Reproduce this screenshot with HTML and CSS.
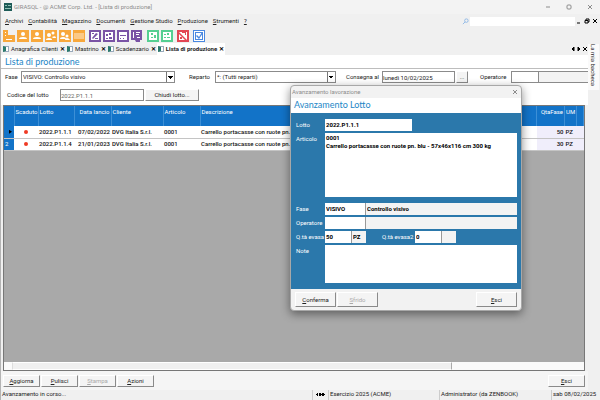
FILE: index.html
```html
<!DOCTYPE html>
<html lang="it">

<head>
    <meta charset="UTF-8">
    <meta name="viewport" content="width=device-width, initial-scale=1.0">
    <title>GIRASQL - Lista di produzione</title>
    <link rel="stylesheet" href="styles.css">
</head>

<body>
    <div class="window">
        <header class="titlebar">
            <svg class="logo" viewBox="0 0 8 8"><rect width="8" height="8" fill="#1d5b57"/><path d="M1 2h2v1H1zM4 2h3v1H4zM1 5h6v1H1z" fill="#8fc1b5"/></svg>
            <span>GIRASQL - @ ACME Corp. Ltd. - [Lista di produzione]</span>
            <div class="win-buttons">
                <button aria-label="Riduci"><svg viewBox="0 0 6 6"><path d="M1 3h4"/></svg></button>
                <button aria-label="Ingrandisci"><svg viewBox="0 0 6 6"><rect x="1" y="1" width="4" height="4" rx="1"/></svg></button>
                <button aria-label="Chiudi"><svg viewBox="0 0 6 6"><path d="M1 1l4 4M5 1l-4 4"/></svg></button>
            </div>
        </header>
        <nav class="menubar">
            <a href="#"><u>A</u>rchivi</a>
            <a href="#"><u>C</u>ontabilità</a>
            <a href="#"><u>M</u>agazzino</a>
            <a href="#"><u>D</u>ocumenti</a>
            <a href="#"><u>G</u>estione Studio</a>
            <a href="#"><u>P</u>roduzione</a>
            <a href="#"><u>S</u>trumenti</a>
            <a href="#"><u>?</u></a>
            <div class="search">
                <svg viewBox="0 0 8 8"><circle cx="5" cy="3" r="2" /><path d="M3.5 4.5L1 7"/></svg>
                <input type="text" aria-label="Cerca">
            </div>
            <div class="mdi-buttons">
                <button aria-label="Riduci scheda"><svg viewBox="0 0 6 6"><path d="M1 5h3"/></svg></button>
                <button aria-label="Ripristina scheda"><svg viewBox="0 0 6 6"><path d="M2 2V1h3v3H4M1 2.5h3V5H1z"/></svg></button>
                <button aria-label="Chiudi scheda"><svg viewBox="0 0 6 6"><path d="M1 1l4 4M5 1L1 5"/></svg></button>
            </div>
        </nav>
        <div class="toolbar">
            <div class="group orange">
                <button aria-label="Azienda"><svg viewBox="0 0 12 12"><path d="M0 0h5v5h7v7H0z"/><path class="w" d="M2 2h1v1H2zM2 5h1v1H2zM3 9h6v1H3z"/></svg></button>
                <button aria-label="Clienti"><svg viewBox="0 0 12 12"><path d="M0 0h12v12H0z"/><circle class="w" cx="6" cy="4" r="2"/><path class="w" d="M2 9q0-2 4-2t4 2z"/></svg></button>
                <button aria-label="Fornitori"><svg viewBox="0 0 12 12"><path d="M0 0h12v12H0z"/><circle class="w" cx="6" cy="4" r="2"/><path class="w" d="M2 9q0-2 4-2t4 2z"/></svg></button>
                <button aria-label="Agenti"><svg viewBox="0 0 12 12"><path d="M0 0h12v12H0z"/><circle class="w" cx="4" cy="5" r="2"/><circle class="w" cx="8" cy="3" r="1.5"/><path class="w" d="M1 10q0-2 3-2t3 2zM7 7q4-2 4 1H8z"/></svg></button>
                <button aria-label="Contatti"><svg viewBox="0 0 12 12"><path d="M0 0h12v12H0z"/><circle class="w" cx="4" cy="4" r="2"/><circle class="w" cx="8" cy="6" r="1.5"/><path class="w" d="M1 9q0-2 3-2t3 2zM6 10q0-2 2-2t3 2z"/></svg></button>
                <button aria-label="Articoli"><svg viewBox="0 0 12 12"><path d="M0 0h12v12H0z"/><path fill="#fbc987" d="M1 3h10v6H1z"/></svg></button>
            </div>
            <div class="group purple">
                <button aria-label="Modifica"><svg viewBox="0 0 12 12"><path d="M0 0h12v12H0z"/><path class="w" d="M2 2h8v8H2z"/><path d="M3 8l4-5 2 1-5 5zM6 8h3v1H6zM3 3h2v1H3z"/></svg></button>
                <button aria-label="Prima nota"><svg viewBox="0 0 12 12"><path d="M0 0h12v12H0z"/><path class="w" d="M2 2h8v8H2z"/><path d="M3 4h2v2H3zM6 3h2v2H6zM3 8h2v1H3zM6 7h3v2H6z"/></svg></button>
                <button aria-label="Scadenze"><svg viewBox="0 0 12 12"><path d="M0 0h12v12H0z"/><path class="w" d="M2 2h8v8H2z"/><path d="M3 5h6v1H3zM3 8h1v1H3zM6 8h1v1H6z"/></svg></button>
                <button aria-label="Registri"><svg viewBox="0 0 12 12"><path d="M0 0h11v10H9v2H5l-1-2H0z"/><path class="w" d="M2 2h1v6H2zM5 2h4v1H5zM5 4h3v1H5zM6 7h3v1H6z"/></svg></button>
            </div>
            <div class="group green">
                <button aria-label="Ordini"><svg viewBox="0 0 12 12"><path d="M0 0h12v12H0z"/><path class="w" d="M2 2h8v8H2z"/><path d="M4 3h2v2H4zM7 5h2v3H7zM4 7h2v1H4z"/></svg></button>
                <button aria-label="Documenti"><svg viewBox="0 0 12 12"><path d="M0 0h12v12H0z"/><path class="w" d="M2 2h8v8H2z"/><path d="M3 4h2v1H3zM6 3h2v2H6zM3 7h2v1H3zM6 7h3v1H6z"/></svg></button>
            </div>
            <div class="group red">
                <button aria-label="Produzione"><svg viewBox="0 0 12 12"><path d="M0 0h12v12H0z"/><path class="w" d="M2 2h8v8H2z"/><path d="M2 2l8 8H8L2 4zM5 2h4v3H8V3H5zM3 7h2v2H3z"/></svg></button>
            </div>
            <div class="group blue">
                <button aria-label="Attività"><svg viewBox="0 0 12 12"><path d="M0 0h12v12H0z"/><path class="w" d="M1 1h10v10H1z"/><path d="M2 2h8v8H2z"/><path class="w" d="M3 3h6v6H3z"/><path d="M3 6l1-1 2 2 3-5 1 1-4 6z"/></svg></button>
            </div>
        </div>
        <div class="workspace">
            <main class="content">
                <div class="tabs">
                    <a href="#" class="tab"><i class="tab-icon"></i>Anagrafica Clienti<b>✕</b></a>
                    <a href="#" class="tab"><i class="tab-icon"></i>Mastrino<b>✕</b></a>
                    <a href="#" class="tab"><i class="tab-icon"></i>Scadenzario<b>✕</b></a>
                    <a href="#" class="tab active"><i class="tab-icon"></i>Lista di produzione<b>✕</b></a>
                    <div class="tab-nav">
                        <button aria-label="Precedente"><svg viewBox="0 0 6 6"><path d="M4 1L2 3l2 2z"/></svg></button>
                        <button aria-label="Successiva"><svg viewBox="0 0 6 6"><path d="M2 1l2 2-2 2z"/></svg></button>
                        <button aria-label="Chiudi"><svg viewBox="0 0 6 6"><path d="M1 1l4 4M5 1L1 5"/></svg></button>
                    </div>
                </div>
                <h1>Lista di produzione</h1>
                <form class="filters">
                    <label for="fase" class="l-fase">Fase</label>
                    <select id="fase" class="fase">
                        <option>VISIVO: Controllo visivo</option>
                    </select>
                    <label for="reparto" class="l-reparto">Reparto</label>
                    <select id="reparto" class="reparto">
                        <option>*: (Tutti reparti)</option>
                    </select>
                    <label for="consegna" class="l-consegna">Consegna al</label>
                    <input id="consegna" class="consegna" type="text" value="lunedì 10/02/2025">
                    <button type="button" class="btn dots">...</button>
                    <label for="operatore" class="l-operatore">Operatore</label>
                    <input id="operatore" class="operatore" type="text">
                    <input class="operatore-nome" type="text" aria-label="Nome operatore" readonly>
                </form>
                <form class="lotto-row">
                    <label for="codice">Codice del lotto</label>
                    <input id="codice" type="text" value="2022.P1.1.1">
                    <button type="button" class="btn">Chiudi lotto...</button>
                </form>
                <div class="grid">
                    <table>
                        <colgroup>
                            <col class="c-num"><col class="c-scad"><col class="c-lotto"><col class="c-data"><col class="c-cli"><col class="c-art"><col><col class="c-qta"><col class="c-um"><col class="c-end">
                        </colgroup>
                        <thead>
                            <tr>
                                <th></th>
                                <th>Scaduto</th>
                                <th>Lotto</th>
                                <th class="right">Data lancio</th>
                                <th>Cliente</th>
                                <th>Articolo</th>
                                <th>Descrizione</th>
                                <th class="right">QtaFase</th>
                                <th>UM</th>
                                <th></th>
                            </tr>
                        </thead>
                        <tbody>
                            <tr>
                                <td class="num"><i class="arrow"></i></td>
                                <td class="center"><i class="dot"></i></td>
                                <td>2022.P1.1.1</td>
                                <td class="right">07/02/2022</td>
                                <td>DVG Italia S.r.l.</td>
                                <td>0001</td>
                                <td>Carrello portacasse con ruote pn.</td>
                                <td class="right tint">50</td>
                                <td class="tint">PZ</td>
                                <td class="tint"></td>
                            </tr>
                            <tr>
                                <td class="num">2</td>
                                <td class="center"><i class="dot"></i></td>
                                <td>2022.P1.1.4</td>
                                <td class="right">21/01/2023</td>
                                <td>DVG Italia S.r.l.</td>
                                <td>0001</td>
                                <td>Carrello portacasse con ruote pn.</td>
                                <td class="right tint">30</td>
                                <td class="tint">PZ</td>
                                <td class="tint"></td>
                            </tr>
                        </tbody>
                    </table>
                    <div class="scrollbar"><div class="thumb"></div></div>
                </div>
                <div class="actions">
                    <button class="btn"><u>A</u>ggiorna</button>
                    <button class="btn"><u>P</u>ulisci</button>
                    <button class="btn" disabled><u>S</u>tampa</button>
                    <button class="btn"><u>A</u>zioni</button>
                    <button class="btn last"><u>E</u>sci</button>
                </div>
            </main>
            <aside class="side"><a href="#">La mia bacheca</a></aside>
        </div>
        <footer class="statusbar">
            <span class="message">Avanzamento in corso...</span>
            <span class="plug"><svg viewBox="0 0 9 5"><path d="M0 2h1v1H0zM1 1h1v3H1zM3 1h2v3H3zM5 2h1v1H5zM6 1h2v3H6zM8 2h1v1H8z"/></svg></span>
            <span class="esercizio">Esercizio 2025 (ACME)</span>
            <span class="utente">Administrator (da ZENBOOK)</span>
            <span class="data">sab 08/02/2025</span>
        </footer>

        <form class="dialog" role="dialog" aria-label="Avanzamento lavorazione">
            <div class="dialog-title">
                <span>Avanzamento lavorazione</span>
                <button type="button" aria-label="Chiudi"><svg viewBox="0 0 6 6"><path d="M1 1l4 4M5 1L1 5"/></svg></button>
            </div>
            <h2>Avanzamento Lotto</h2>
            <div class="dialog-body">
                <label for="d-lotto">Lotto</label>
                <div class="field"><input id="d-lotto" class="w-lotto" type="text" value="2022.P1.1.1"></div>
                <label for="d-articolo">Articolo</label>
                <textarea id="d-articolo" class="articolo">0001
Carrello portacasse con ruote pn. blu - 57x46x116 cm 300 kg</textarea>
                <label for="d-fase">Fase</label>
                <div class="field">
                    <input id="d-fase" class="w-code" type="text" value="VISIVO">
                    <input class="grow" type="text" value="Controllo visivo" aria-label="Descrizione fase" readonly>
                </div>
                <label for="d-oper">Operatore</label>
                <div class="field">
                    <input id="d-oper" class="w-code" type="text">
                    <input class="grow" type="text" aria-label="Nome" readonly>
                </div>
                <label for="d-qta">Q.tà evasa</label>
                <div class="field">
                    <input id="d-qta" class="w-qta" type="text" value="50">
                    <input class="w-um" type="text" value="PZ" aria-label="UM" readonly>
                    <label for="d-qta2" class="second">Q.tà evasa2</label>
                    <input id="d-qta2" class="w-qta" type="text" value="0">
                    <input class="w-um" type="text" aria-label="UM 2" readonly>
                </div>
                <label for="d-note">Note</label>
                <textarea id="d-note" class="note"></textarea>
            </div>
            <div class="dialog-footer">
                <button type="button" class="btn"><u>C</u>onferma</button>
                <button type="button" class="btn" disabled><u>S</u>frido</button>
                <button type="button" class="btn last"><u>E</u>sci</button>
            </div>
        </form>
    </div>
</body>

</html>
```
FILE: styles.css
```css
* {
    box-sizing: border-box;
}

body {
    margin: 0;
    font-family: Roboto, "Open Sans", sans-serif;
    font-size: 6px;
    line-height: 8px;
    color: #222;
}

a {
    color: inherit;
    text-decoration: none;
}

button,
input,
select,
textarea {
    font: inherit;
    color: inherit;
    margin: 0;
    padding: 0;
    border: none;
    border-radius: 0;
    min-width: 0;
}

button {
    background: none;
}

svg {
    display: block;
    fill: none;
    stroke: currentColor;
}

.window {
    position: relative;
    display: flex;
    flex-direction: column;
    min-height: 100vh;
    background: #f0f0f0;
    border-left: 1px solid #b4b4b4;
}

/* title bar */
.titlebar {
    display: flex;
    align-items: center;
    height: 14px;
    padding: 0 7px 0 3px;
    gap: 2px;
    background: #f3f3f3;
    color: #8c8c8c;
}

.logo {
    width: 8px;
    height: 8px;
    stroke: none;
}

.win-buttons {
    display: flex;
    gap: 15px;
    margin-left: auto;
}

.win-buttons svg,
.mdi-buttons svg,
.tab-nav svg {
    width: 6px;
    height: 6px;
}

/* menu */
.menubar {
    display: flex;
    align-items: center;
    height: 14px;
    padding: 0 2px 0 4px;
    gap: 5px;
}

.search {
    display: flex;
    align-items: center;
    gap: 1px;
    margin-left: auto;
}

.search svg {
    width: 7px;
    height: 7px;
    color: #8ab6e6;
}

.search input {
    width: 105px;
    height: 9px;
    background: #fff;
}

.mdi-buttons {
    display: flex;
    gap: 2px;
    margin-left: -4px;
    color: #000;
}

/* toolbar */
.toolbar {
    display: flex;
    height: 15px;
    padding: 1px 2px;
    gap: 4px;
}

.group {
    display: flex;
    gap: 2px;
}

.group svg {
    width: 12px;
    height: 12px;
    fill: currentColor;
    stroke: none;
}

.group .w {
    fill: #fff;
}

.orange {
    color: #f8a83c;
}

.purple {
    color: #7a53a5;
}

.green {
    color: #55cf92;
}

.red {
    color: #e34654;
}

.blue {
    color: #4a88e0;
}

.workspace {
    display: flex;
    flex: 1;
}

.content {
    display: flex;
    flex-direction: column;
    flex: 1;
    min-width: 0;
}

/* tabs */
.tabs {
    display: flex;
    height: 12px;
    padding-left: 1px;
}

.tab {
    display: flex;
    align-items: center;
    gap: 2px;
    padding: 0 1px;
}

.tab b {
    font-size: 6px;
    color: #000;
}

.tab.active {
    background: #fff;
    font-weight: bold;
}

.tab-icon {
    width: 6px;
    height: 6px;
    border: 1px solid #9ab;
    border-left: 3px solid #2c7b6c;
    background: #fff;
}

.tab-nav {
    display: flex;
    align-items: center;
    margin-left: auto;
    color: #000;
}

.tab-nav svg {
    fill: currentColor;
}

h1,
h2 {
    margin: 0;
    font-family: Lato, "Open Sans", sans-serif;
    font-weight: normal;
    color: #1c86c6;
}

h1 {
    height: 14px;
    padding-left: 4px;
    font-size: 9px;
    line-height: 13px;
    background: #fff;
    border-bottom: 1px solid #bdbdbd;
}

/* filters */
.filters,
.lotto-row {
    display: flex;
    align-items: center;
    background: #fff;
}

.filters {
    height: 16px;
    padding-left: 4px;
}

.l-fase {
    width: 16px;
}

.l-reparto {
    width: 26px;
}

.l-consegna {
    width: 36px;
}

.l-operatore {
    width: 31px;
}

.filters input,
.filters select,
.lotto-row input {
    height: 12px;
    border: 1px solid #8b8b8b;
    background: #fff;
}

.filters select {
    appearance: none;
    padding-left: 1px;
    background: linear-gradient(#777, #777) right 7px top / 1px 100% no-repeat,
        conic-gradient(from 315deg at 50% 100%, #000 90deg, transparent 0) right 1px center / 6px 3px no-repeat, #fff;
}

.filters .fase {
    width: 154px;
    margin-right: 14px;
}

.filters .reparto {
    width: 121px;
    margin-right: 10px;
}

.filters .consegna {
    width: 73px;
}

.btn {
    height: 12px;
    background: #f4f4f4;
    border: 1px solid;
    border-color: #fff #8a8a8a #8a8a8a #fff;
    color: #222;
}

.btn:disabled {
    color: #aaa;
}

.dots {
    width: 12px;
    margin: 0 12px 0 1px;
}

.filters .operatore {
    width: 28px;
}

.filters .operatore-nome {
    flex: 1;
    border-left: none;
    border-right: none;
    background: #f3f3f3;
}

.lotto-row {
    height: 20px;
    padding-left: 6px;
}

.lotto-row label {
    width: 53px;
}

.lotto-row input {
    width: 84px;
    color: #666;
}

.lotto-row .btn {
    width: 54px;
    margin-left: 1px;
}

/* grid */
.grid {
    display: flex;
    flex-direction: column;
    flex: 1;
    margin: 0 3px 0 2px;
    background: #a9a9a9;
    border: 1px solid #777;
}

table {
    width: 100%;
    table-layout: fixed;
    border-collapse: collapse;
}

.c-num {
    width: 10px;
}

.c-scad {
    width: 24px;
}

.c-lotto {
    width: 36px;
}

.c-data {
    width: 37px;
}

.c-cli {
    width: 52px;
}

.c-art {
    width: 37px;
}

.c-qta {
    width: 28px;
}

.c-um {
    width: 12px;
}

.c-end {
    width: 7px;
}

th,
td {
    padding: 0 1px;
    text-align: left;
    white-space: nowrap;
    overflow: hidden;
}

th {
    height: 20px;
    padding-top: 2px;
    vertical-align: top;
    font-weight: normal;
    color: #fff;
    background: #1273c8;
    border-right: 1px solid #3c8fd6;
}

td {
    height: 12px;
    font-weight: 500;
    color: #111;
    background: #fff;
    border-bottom: 1px solid #c4c4c4;
}

.right {
    text-align: right;
}

.center {
    text-align: center;
}

.num {
    font-weight: normal;
    color: #fff;
    background: #1273c8;
}

.tint {
    background: #f0eefb;
}

.dot {
    display: inline-block;
    width: 4px;
    height: 4px;
    border-radius: 50%;
    background: #ef3a24;
}

.arrow {
    display: block;
    margin-left: 4px;
    width: 3px;
    height: 4px;
    background: #000;
    clip-path: polygon(0 0, 100% 50%, 0 100%);
}

.scrollbar {
    height: 8px;
    margin-top: auto;
    padding-left: 8px;
    background: #fafafa;
}

.thumb {
    width: 77%;
    height: 8px;
    background: #f0f0f0;
    border: 1px solid;
    border-color: #fff #aaa #fff #ddd;
}

.actions {
    display: flex;
    gap: 1px;
    padding: 4px 3px 3px 2px;
    background: #f5f5f5;
}

.actions .btn {
    width: 37px;
}

.last {
    margin-left: auto;
}

.side {
    width: 12px;
    padding-top: 1px;
}

.side a {
    display: block;
    height: 46px;
    writing-mode: vertical-rl;
    line-height: 11px;
    background: #fafafa;
}

/* status bar */
.statusbar {
    display: flex;
    height: 10px;
    padding-left: 1px;
}

.statusbar .message {
    flex: 1;
}

.statusbar .plug {
    width: 16px;
    padding: 2px 3px;
    color: #000;
    border-left: 1px solid #ccc;
}

.plug svg {
    width: 9px;
    height: 5px;
    fill: currentColor;
    stroke: none;
}

.statusbar .esercizio {
    width: 111px;
    padding-left: 1px;
    border-left: 1px solid #ccc;
}

.statusbar .utente {
    width: 112px;
    padding-left: 1px;
    border-left: 1px solid #ccc;
}

.statusbar .data {
    width: 49px;
    padding-left: 1px;
    border-left: 1px solid #ccc;
}

/* floating window */
.dialog {
    position: absolute;
    left: 289px;
    top: 85px;
    width: 232px;
    background: #f2f2f2;
    border: 1px solid #a8a8a8;
    border-radius: 4px;
    box-shadow: 0 3px 10px rgba(0, 0, 0, 0.45);
    overflow: hidden;
}

.dialog-title {
    display: flex;
    align-items: center;
    justify-content: space-between;
    height: 12px;
    padding: 0 3px 0 1px;
    color: #8c8c8c;
}

.dialog-title svg {
    width: 6px;
    height: 6px;
}

h2 {
    height: 15px;
    padding-left: 3px;
    font-size: 9px;
    line-height: 14px;
    background: #fff;
}

.dialog-body {
    display: grid;
    grid-template-columns: 29px 1fr;
    gap: 2px 0;
    padding: 6px 4px 6px 5px;
    color: #fff;
    background: #2b78ab;
}

.dialog-body label {
    padding-top: 2px;
    white-space: nowrap;
}

.dialog-body input,
.dialog-body textarea {
    background: #fff;
    color: #000;
    font-weight: bold;
}

.dialog-body input {
    padding: 0 1px 1px;
}

.dialog-body textarea {
    display: block;
    width: 100%;
    padding: 1px;
    resize: none;
    overflow: hidden;
}

.dialog-body input[readonly] {
    background: #f3f3f3;
    border-left: 1px solid #999;
}

.field {
    display: flex;
}

.field input {
    height: 12px;
}

.w-lotto {
    width: 87px;
}

.articolo {
    height: 64px;
    margin-bottom: 4px;
}

.w-code {
    width: 40px;
}

.grow {
    flex: 1;
}

.w-qta {
    width: 26px;
}

.w-um {
    width: 15px;
}

.dialog-body .second {
    width: 49px;
    padding-left: 16px;
}

.note {
    height: 38px;
}

.dialog-footer {
    display: flex;
    gap: 1px;
    padding: 3px 4px;
}

.dialog-footer .btn {
    width: 41px;
    height: 15px;
}
```
